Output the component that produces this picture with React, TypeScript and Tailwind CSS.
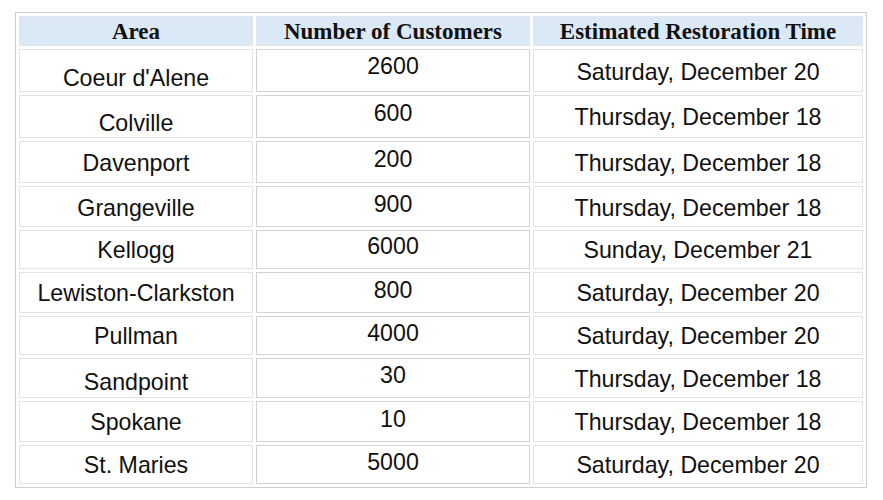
const rows = [
  { area: "Coeur d'Alene", count: "2600", time: "Saturday, December 20", h: "h-[43px]", a: "pt-[15px]", n: "pb-[9px]", t: "pt-[2px]" },
  { area: "Colville", count: "600", time: "Thursday, December 18", h: "h-[43px]", a: "pt-[13px]", n: "pb-[8px]", t: "pt-[1px]" },
  { area: "Davenport", count: "200", time: "Thursday, December 18", h: "h-[42px]", a: "pt-[1px]", n: "pb-[7px]", t: "pt-[1px]" },
  { area: "Grangeville", count: "900", time: "Thursday, December 18", h: "h-[41px]", a: "pt-[2px]", n: "pb-[5px]", t: "pt-[2px]" },
  { area: "Kellogg", count: "6000", time: "Sunday, December 21", h: "h-[39px]", a: "pt-[1px]", n: "pb-[7px]", t: "pt-[1px]" },
  { area: "Lewiston-Clarkston", count: "800", time: "Saturday, December 20", h: "h-[41px]", a: "pt-[1px]", n: "pb-[6px]", t: "pt-[1px]" },
  { area: "Pullman", count: "4000", time: "Saturday, December 20", h: "h-[39px]", a: "pt-[1px]", n: "pb-[6px]", t: "pt-[1px]" },
  { area: "Sandpoint", count: "30", time: "Thursday, December 18", h: "h-[40px]", a: "pt-[7px]", n: "pb-[6px]", t: "pt-[1px]" },
  { area: "Spokane", count: "10", time: "Thursday, December 18", h: "h-[41px]", a: "pt-0", n: "pb-[6px]", t: "pt-0" },
  { area: "St. Maries", count: "5000", time: "Saturday, December 20", h: "h-[39px]", a: "pt-[1px]", n: "pb-[6px]", t: "pt-[1px]" },
];

const headCell =
  "h-[30px] p-0 bg-[#dbe8f6] border border-[#e2e6ea] text-center align-middle font-bold text-[23px] leading-none text-[#111]";
const bodyCell =
  "p-0 border text-center align-middle text-[23.2px] leading-[26px] text-[#111]";

export default function App() {
  return (
    <div className="w-[883px] h-[500px] bg-white pt-[12px] pl-[15px]">
      <table className="w-[851px] table-fixed border-separate border-spacing-x-[3px] border-spacing-y-[3px] border border-[#cfcfcf] font-['Liberation_Sans',Arial,sans-serif]">
        <colgroup>
          <col className="w-[234px]" />
          <col className="w-[274px]" />
          <col className="w-[330px]" />
        </colgroup>
        <thead className="font-['Liberation_Serif','Times_New_Roman',serif]">
          <tr>
            <th className={headCell}>Area</th>
            <th className={headCell}>Number of Customers</th>
            <th className={headCell}>Estimated Restoration Time</th>
          </tr>
        </thead>
        <tbody>
          {rows.map((r) => (
            <tr key={r.area} className={r.h}>
              <td className={`${bodyCell} ${r.a} border-[#e3e3e3]`}>{r.area}</td>
              <td className={`${bodyCell} ${r.n} border-[#d2d2d2]`}>{r.count}</td>
              <td className={`${bodyCell} ${r.t} border-[#e3e3e3]`}>{r.time}</td>
            </tr>
          ))}
        </tbody>
      </table>
    </div>
  );
}
